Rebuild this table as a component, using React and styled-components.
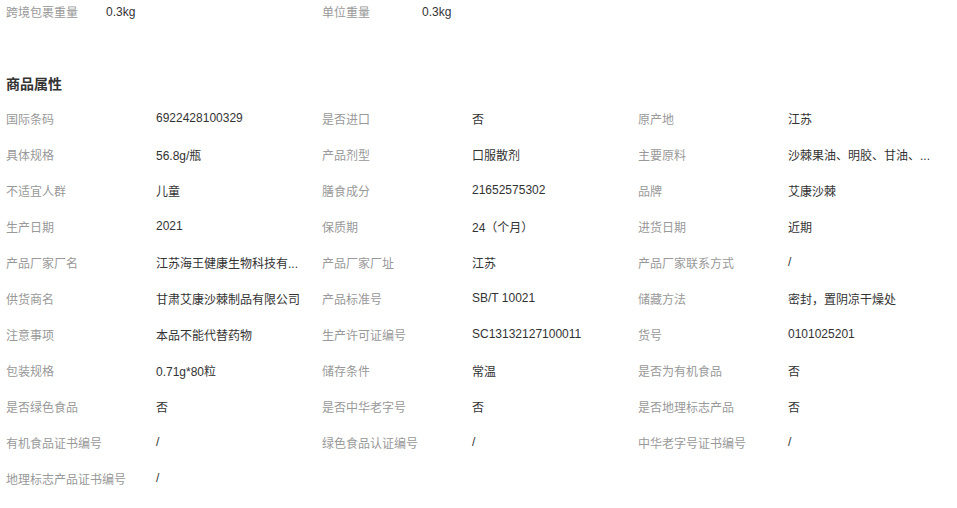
import React from 'react';
import styled, { createGlobalStyle } from 'styled-components';

const GlobalStyle = createGlobalStyle`
  body {
    margin: 0;
    background: #fff;
    font-family: "Liberation Sans", "Noto Sans CJK SC", sans-serif;
    font-size: 12px;
    color: #333;
  }
`;

const Page = styled.div`
  padding: 0 6px;
  width: 957px;
  box-sizing: border-box;
`;

const Grid = styled.div`
  display: grid;
  grid-template-columns: repeat(3, 316px);
  grid-auto-rows: ${p => p.rowHeight}px;
`;

const Cell = styled.div`
  display: flex;
  align-items: center;
  min-width: 0;
`;

const Label = styled.span`
  flex: 0 0 ${p => p.width}px;
  color: #999;
  white-space: nowrap;
`;

const Value = styled.span`
  width: 150px;
  color: #333;
  white-space: nowrap;
`;

const Heading = styled.h3`
  margin: 49px 0 4px;
  font-size: 14px;
  line-height: 24px;
  font-weight: bold;
  color: #333;
`;

const weights = [
  ['跨境包裹重量', '0.3kg'],
  ['单位重量', '0.3kg'],
];

// long values are shown already shortened, as the list does
const attrs = [
  ['国际条码', '6922428100329'],
  ['是否进口', '否'],
  ['原产地', '江苏'],
  ['具体规格', '56.8g/瓶'],
  ['产品剂型', '口服散剂'],
  ['主要原料', '沙棘果油、明胶、甘油、...'],
  ['不适宜人群', '儿童'],
  ['膳食成分', '21652575302'],
  ['品牌', '艾康沙棘'],
  ['生产日期', '2021'],
  ['保质期', '24（个月）'],
  ['进货日期', '近期'],
  ['产品厂家厂名', '江苏海王健康生物科技有...'],
  ['产品厂家厂址', '江苏'],
  ['产品厂家联系方式', '/'],
  ['供货商名', '甘肃艾康沙棘制品有限公司'],
  ['产品标准号', 'SB/T 10021'],
  ['储藏方法', '密封，置阴凉干燥处'],
  ['注意事项', '本品不能代替药物'],
  ['生产许可证编号', 'SC13132127100011'],
  ['货号', '0101025201'],
  ['包装规格', '0.71g*80粒'],
  ['储存条件', '常温'],
  ['是否为有机食品', '否'],
  ['是否绿色食品', '否'],
  ['是否中华老字号', '否'],
  ['是否地理标志产品', '否'],
  ['有机食品证书编号', '/'],
  ['绿色食品认证编号', '/'],
  ['中华老字号证书编号', '/'],
  ['地理标志产品证书编号', '/'],
];

const App = () => (
  <>
    <GlobalStyle />
    <Page>
      <Grid rowHeight={23}>
        {weights.map(([k, v]) => (
          <Cell key={k}>
            <Label width={100}>{k}</Label>
            <Value>{v}</Value>
          </Cell>
        ))}
      </Grid>
      <Heading>商品属性</Heading>
      <Grid rowHeight={36}>
        {attrs.map(([k, v]) => (
          <Cell key={k}>
            <Label width={150}>{k}</Label>
            <Value>{v}</Value>
          </Cell>
        ))}
      </Grid>
    </Page>
  </>
);

export default App;
